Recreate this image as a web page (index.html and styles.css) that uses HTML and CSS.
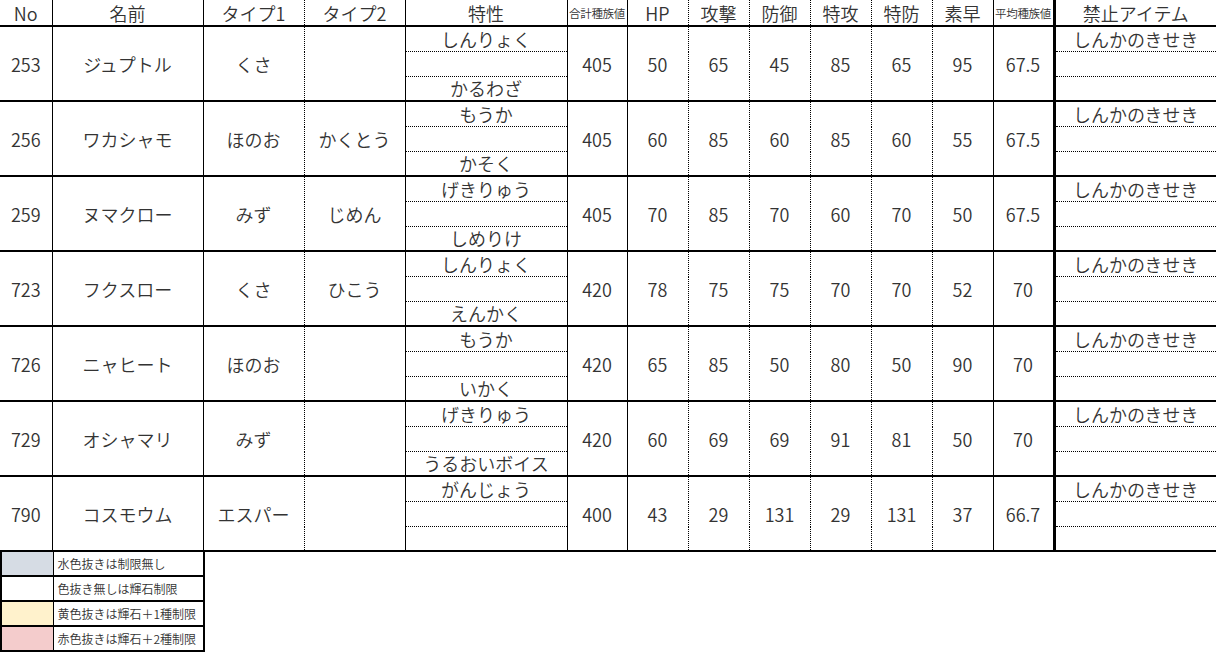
FILE: index.html
```html
<!DOCTYPE html>
<html lang="ja">
<head>
<meta charset="utf-8">
<link rel="stylesheet" href="styles.css">
</head>
<body>
<table class="main">
<colgroup>
<col class="w52"><col class="w151"><col class="w101"><col class="w101"><col class="w162"><col class="w60">
<col class="w61"><col class="w61"><col class="w61"><col class="w61"><col class="w61"><col class="w61"><col class="w61"><col class="w162">
</colgroup>
<thead>
<tr class="hr">
<th class="sv">No</th><th class="sv">名前</th><th class="dv">タイプ1</th><th class="sv">タイプ2</th><th class="sv">特性</th><th class="sv small">合計種族値</th>
<th class="dv">HP</th><th class="dv">攻撃</th><th class="dv">防御</th><th class="dv">特攻</th><th class="dv">特防</th><th class="sv">素早</th><th class="tv small">平均種族値</th><th>禁止アイテム</th>
</tr>
</thead>
<tbody>
<tr><td rowspan="3" class="sv blk">253</td><td rowspan="3" class="sv blk">ジュプトル</td><td rowspan="3" class="dv blk">くさ</td><td rowspan="3" class="sv blk"></td><td class="sv sub">しんりょく</td><td rowspan="3" class="sv blk">405</td><td rowspan="3" class="dv blk">50</td><td rowspan="3" class="dv blk">65</td><td rowspan="3" class="dv blk">45</td><td rowspan="3" class="dv blk">85</td><td rowspan="3" class="dv blk">65</td><td rowspan="3" class="sv blk">95</td><td rowspan="3" class="tv blk">67.5</td><td class="sub">しんかのきせき</td></tr>
<tr><td class="sv sub"></td><td class="sub"></td></tr>
<tr class="last"><td class="sv blk">かるわざ</td><td class="blk"></td></tr>

<tr><td rowspan="3" class="sv blk">256</td><td rowspan="3" class="sv blk">ワカシャモ</td><td rowspan="3" class="dv blk">ほのお</td><td rowspan="3" class="sv blk">かくとう</td><td class="sv sub">もうか</td><td rowspan="3" class="sv blk">405</td><td rowspan="3" class="dv blk">60</td><td rowspan="3" class="dv blk">85</td><td rowspan="3" class="dv blk">60</td><td rowspan="3" class="dv blk">85</td><td rowspan="3" class="dv blk">60</td><td rowspan="3" class="sv blk">55</td><td rowspan="3" class="tv blk">67.5</td><td class="sub">しんかのきせき</td></tr>
<tr><td class="sv sub"></td><td class="sub"></td></tr>
<tr class="last"><td class="sv blk">かそく</td><td class="blk"></td></tr>

<tr><td rowspan="3" class="sv blk">259</td><td rowspan="3" class="sv blk">ヌマクロー</td><td rowspan="3" class="dv blk">みず</td><td rowspan="3" class="sv blk">じめん</td><td class="sv sub">げきりゅう</td><td rowspan="3" class="sv blk">405</td><td rowspan="3" class="dv blk">70</td><td rowspan="3" class="dv blk">85</td><td rowspan="3" class="dv blk">70</td><td rowspan="3" class="dv blk">60</td><td rowspan="3" class="dv blk">70</td><td rowspan="3" class="sv blk">50</td><td rowspan="3" class="tv blk">67.5</td><td class="sub">しんかのきせき</td></tr>
<tr><td class="sv sub"></td><td class="sub"></td></tr>
<tr class="last"><td class="sv blk">しめりけ</td><td class="blk"></td></tr>

<tr><td rowspan="3" class="sv blk">723</td><td rowspan="3" class="sv blk">フクスロー</td><td rowspan="3" class="dv blk">くさ</td><td rowspan="3" class="sv blk">ひこう</td><td class="sv sub">しんりょく</td><td rowspan="3" class="sv blk">420</td><td rowspan="3" class="dv blk">78</td><td rowspan="3" class="dv blk">75</td><td rowspan="3" class="dv blk">75</td><td rowspan="3" class="dv blk">70</td><td rowspan="3" class="dv blk">70</td><td rowspan="3" class="sv blk">52</td><td rowspan="3" class="tv blk">70</td><td class="sub">しんかのきせき</td></tr>
<tr><td class="sv sub"></td><td class="sub"></td></tr>
<tr class="last"><td class="sv blk">えんかく</td><td class="blk"></td></tr>

<tr><td rowspan="3" class="sv blk">726</td><td rowspan="3" class="sv blk">ニャヒート</td><td rowspan="3" class="dv blk">ほのお</td><td rowspan="3" class="sv blk"></td><td class="sv sub">もうか</td><td rowspan="3" class="sv blk">420</td><td rowspan="3" class="dv blk">65</td><td rowspan="3" class="dv blk">85</td><td rowspan="3" class="dv blk">50</td><td rowspan="3" class="dv blk">80</td><td rowspan="3" class="dv blk">50</td><td rowspan="3" class="sv blk">90</td><td rowspan="3" class="tv blk">70</td><td class="sub">しんかのきせき</td></tr>
<tr><td class="sv sub"></td><td class="sub"></td></tr>
<tr class="last"><td class="sv blk">いかく</td><td class="blk"></td></tr>

<tr><td rowspan="3" class="sv blk">729</td><td rowspan="3" class="sv blk">オシャマリ</td><td rowspan="3" class="dv blk">みず</td><td rowspan="3" class="sv blk"></td><td class="sv sub">げきりゅう</td><td rowspan="3" class="sv blk">420</td><td rowspan="3" class="dv blk">60</td><td rowspan="3" class="dv blk">69</td><td rowspan="3" class="dv blk">69</td><td rowspan="3" class="dv blk">91</td><td rowspan="3" class="dv blk">81</td><td rowspan="3" class="sv blk">50</td><td rowspan="3" class="tv blk">70</td><td class="sub">しんかのきせき</td></tr>
<tr><td class="sv sub"></td><td class="sub"></td></tr>
<tr class="last"><td class="sv blk">うるおいボイス</td><td class="blk"></td></tr>

<tr><td rowspan="3" class="sv blk">790</td><td rowspan="3" class="sv blk">コスモウム</td><td rowspan="3" class="dv blk">エスパー</td><td rowspan="3" class="sv blk"></td><td class="sv sub">がんじょう</td><td rowspan="3" class="sv blk">400</td><td rowspan="3" class="dv blk">43</td><td rowspan="3" class="dv blk">29</td><td rowspan="3" class="dv blk">131</td><td rowspan="3" class="dv blk">29</td><td rowspan="3" class="dv blk">131</td><td rowspan="3" class="sv blk">37</td><td rowspan="3" class="tv blk">66.7</td><td class="sub">しんかのきせき</td></tr>
<tr><td class="sv sub"></td><td class="sub"></td></tr>
<tr class="last"><td class="sv blk"></td><td class="blk"></td></tr>
</tbody>
</table>

<table class="legend">
<colgroup><col class="w52"><col class="w151"></colgroup>
<tr><td class="sw sw-gray"></td><td class="lt">水色抜きは制限無し</td></tr>
<tr><td class="sw sw-white"></td><td class="lt">色抜き無しは輝石制限</td></tr>
<tr><td class="sw sw-yellow"></td><td class="lt">黄色抜きは輝石＋1種制限</td></tr>
<tr><td class="sw sw-red"></td><td class="lt">赤色抜きは輝石＋2種制限</td></tr>
</table>
</body>
</html>
```

FILE: styles.css
```css
html, body {
  margin: 0;
  padding: 0;
  background: #fff;
  overflow: hidden;
}

body {
  font-family: "Noto Sans CJK JP", "Noto Sans", sans-serif;
  color: #333;
}

.w52 { width: 52px; }
.w151 { width: 151px; }
.w101 { width: 101px; }
.w162 { width: 162px; }
.w60 { width: 60px; }
.w61 { width: 61px; }

.main {
  border-collapse: collapse;
  table-layout: fixed;
  width: 1216px;
}

.main th,
.main td {
  padding: 0;
  height: 24px;
  line-height: 24px;
  font-size: 18px;
  font-weight: 350;
  text-align: center;
  vertical-align: middle;
  white-space: nowrap;
  overflow: hidden;
}

.main tr.hr th {
  height: 25px;
}

.main tr.last td {
  height: 23px;
  line-height: 23px;
}

.main th {
  border-bottom: 2px solid #000;
}

.main th.small {
  font-size: 11.5px;
  letter-spacing: -0.3px;
}

.sv { border-right: 1px solid #000; }
.dv { border-right: 1px dotted #000; }
.tv { border-right: 3px solid #000; }

.sub { border-bottom: 1px dotted #000; }
.blk { border-bottom: 2px solid #000; }

.legend {
  border-collapse: collapse;
  table-layout: fixed;
  width: 203px;
  border-left: 2px solid #000;
  border-right: 2px solid #000;
  border-bottom: 2px solid #000;
}

.legend td {
  padding: 0;
  height: 23px;
  border-bottom: 2px solid #000;
}

.legend .sw {
  border-right: 1px solid #000;
}

.legend .lt {
  font-size: 12px;
  line-height: 23px;
  padding-left: 4px;
  font-weight: 350;
  color: #333;
  white-space: nowrap;
}

.sw-gray { background: #d6dce4; }
.sw-white { background: #fff; }
.sw-yellow { background: #fff2cc; }
.sw-red { background: #f4cccc; }
```
